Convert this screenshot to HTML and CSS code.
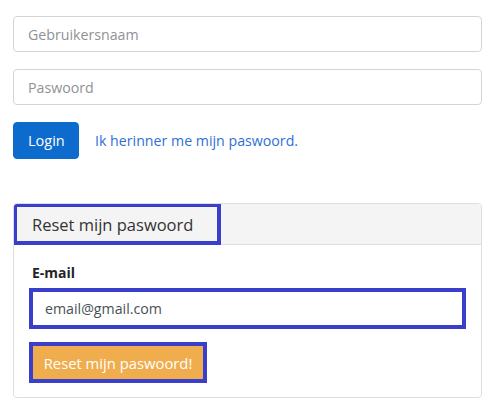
FILE: index.html
```html
<!DOCTYPE html>
<html lang="nl">
<head>
<meta charset="utf-8">
<title>Login</title>
<link rel="stylesheet" href="styles.css">
</head>
<body>
<div class="page">
  <form class="login">
    <div class="form-group">
      <input class="form-control" type="text" placeholder="Gebruikersnaam">
    </div>
    <div class="form-group">
      <input class="form-control" type="password" placeholder="Paswoord">
    </div>
    <div class="actions">
      <button type="button" class="btn btn-primary">Login</button>
      <a class="link" href="#">Ik herinner me mijn paswoord.</a>
    </div>
  </form>

  <div class="card">
    <div class="card-header">
      <span class="header-title">Reset mijn paswoord</span>
    </div>
    <div class="card-body">
      <label class="label">E-mail</label>
      <input class="email-input" type="text" value="email@gmail.com">
      <button type="button" class="btn-reset">Reset mijn paswoord!</button>
    </div>
  </div>
</div>
</body>
</html>
```

FILE: styles.css
```css
* { box-sizing: border-box; }
html, body { margin: 0; padding: 0; background: #ffffff; }
body {
  font-family: "Open Sans", "Noto Sans", sans-serif;
  font-size: 14px;
  color: #212529;
}
.page {
  padding: 16px 18px 0 13px;
}
.login { display: flex; flex-direction: column; }
.form-group { margin-bottom: 17px; }
.form-control {
  display: block;
  width: 100%;
  height: 36px;
  padding: 0 14px;
  border: 1px solid #d2d5d8;
  border-radius: 4px;
  font-family: inherit;
  font-size: 14.2px;
  color: #495057;
  background: #fff;
}
.form-control::placeholder { color: #8f9296; }
.actions {
  display: flex;
  align-items: center;
  gap: 16px;
}
.btn {
  height: 37px;
  padding: 0 14px;
  border: 1px solid transparent;
  border-radius: 4px;
  font-family: inherit;
  font-size: 14.5px;
  cursor: pointer;
}
.btn-primary {
  width: 66px;
  background: #0d6bcd;
  color: #fff;
  border-color: #0d6bcd;
}
.link {
  color: #2f6fd6;
  text-decoration: none;
  font-size: 14.2px;
}
.card {
  margin-top: 44px;
  border: 1px solid #dedede;
  border-radius: 4px;
  overflow: hidden;
}
.card-header {
  height: 41px;
  background: #f4f4f4;
  border-bottom: 1px solid #dedede;
  display: flex;
}
.header-title {
  display: flex;
  align-items: center;
  width: 208px;
  height: 42px;
  margin: -1px 0 -2px -1px;
  padding-left: 15px;
  border: 4px solid #3a3fcb;
  font-size: 16.5px;
  color: #333;
}
.card-body {
  padding: 18px 15px 14px 15px;
  display: flex;
  flex-direction: column;
  align-items: flex-start;
}
.label {
  font-weight: bold;
  font-size: 14px;
  margin-left: 3px;
  margin-bottom: 6px;
}
.email-input {
  width: 100%;
  height: 41px;
  border: 4px solid #3a3fcb;
  padding: 0 12px;
  font-family: inherit;
  font-size: 14.2px;
  color: #495057;
  background: #fff;
  outline: none;
}
.btn-reset {
  margin-top: 13px;
  width: 178px;
  height: 41px;
  border: 4px solid #3a3fcb;
  background: #f0ad4e;
  color: #fff;
  font-family: inherit;
  font-size: 14.8px;
  padding: 0;
  cursor: pointer;
}
```
